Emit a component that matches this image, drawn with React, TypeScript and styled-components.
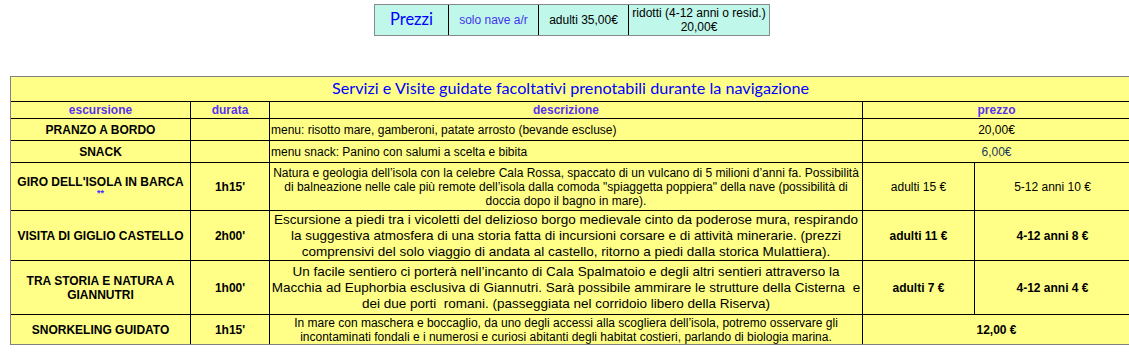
import React from 'react';
import styled, { createGlobalStyle } from 'styled-components';

const GlobalStyle = createGlobalStyle`
  html, body {
    margin: 0;
    padding: 0;
    background: #ffffff;
    overflow: hidden;
  }
  body {
    font-family: "Liberation Sans", Arial, sans-serif;
    font-size: 12px;
    color: #000;
  }
`;

const Page = styled.div`
  width: 1129px;
  padding-top: 4px;
  display: flex;
  flex-direction: column;
`;

const PriceTable = styled.table`
  margin-left: 374px;
  border-collapse: separate;
  border-spacing: 0;
  border: 1px solid #8a8a8a;
  background: #bff7ea;
  table-layout: fixed;
  width: 395px;
`;

const PriceCell = styled.td<{ $color?: string; $w: number }>`
  box-sizing: border-box;
  width: ${(p) => p.$w}px;
  height: 30px;
  padding: 0;
  text-align: center;
  vertical-align: middle;
  color: ${(p) => p.$color || '#000'};
  font-size: 12px;
  line-height: 14px;
  white-space: nowrap;
  border-left: 1px solid #000;
  &:first-child {
    border-left: none;
  }
`;

const ComicText = styled.span<{ $size: number }>`
  font-family: "Comic Sans MS", "Lato", "Noto Sans", sans-serif;
  font-size: ${(p) => p.$size}px;
  color: #0000ff;
`;

const Services = styled.table`
  margin-top: 40px;
  margin-left: 10px;
  border-collapse: separate;
  border-spacing: 0;
  border: 1px solid #808080;
  border-right: none;
  background: #ffff88;
  table-layout: fixed;
  width: 1119px;
`;

const Row = styled.tr<{ $h: number }>`
  height: ${(p) => p.$h}px;
  &:first-child td {
    border-top: none;
  }
`;

const Cell = styled.td<{
  $align?: 'left' | 'center';
  $bold?: boolean;
  $size?: number;
  $lh?: number;
  $color?: string;
}>`
  box-sizing: border-box;
  padding: 0 1px;
  border-top: 1px solid #000;
  border-left: 1px solid #000;
  vertical-align: middle;
  text-align: ${(p) => p.$align || 'center'};
  font-weight: ${(p) => (p.$bold ? 'bold' : 'normal')};
  font-size: ${(p) => p.$size || 12}px;
  line-height: ${(p) => p.$lh || 14}px;
  color: ${(p) => p.$color || '#000'};
  white-space: nowrap;
  overflow: hidden;
  &:first-child {
    border-left: none;
  }
`;

const HeadCell = styled(Cell)`
  color: #5a32f0;
  font-weight: bold;
`;

const Stars = styled.div`
  color: #3a2cff;
  font-size: 9px;
  line-height: 9px;
`;

type Excursion = {
  name: React.ReactNode;
  time: string;
  lines: string[];
  size: number;
  lh: number;
  h: number;
  adults: string;
  kids: string;
  boldPrice: boolean;
};

const excursions: Excursion[] = [
  {
    name: (
      <>
        GIRO DELL'ISOLA IN BARCA
        <Stars>**</Stars>
      </>
    ),
    time: "1h15'",
    lines: [
      'Natura e geologia dell\u2019isola con la celebre Cala Rossa, spaccato di un vulcano di 5 milioni d\u2019anni fa. Possibilità',
      'di balneazione nelle cale più remote dell\u2019isola dalla comoda "spiaggetta poppiera" della nave (possibilità di',
      'doccia dopo il bagno in mare).',
    ],
    size: 12,
    lh: 14,
    h: 48,
    adults: 'adulti 15 €',
    kids: '5-12 anni 10 €',
    boldPrice: false,
  },
  {
    name: 'VISITA DI GIGLIO CASTELLO',
    time: "2h00'",
    lines: [
      'Escursione a piedi tra i vicoletti del delizioso borgo medievale cinto da poderose mura, respirando',
      'la suggestiva atmosfera di una storia fatta di incursioni corsare e di attività minerarie. (prezzi',
      'comprensivi del solo viaggio di andata al castello, ritorno a piedi dalla storica Mulattiera).',
    ],
    size: 13.5,
    lh: 16,
    h: 50,
    adults: 'adulti 11 €',
    kids: '4-12 anni 8 €',
    boldPrice: true,
  },
  {
    name: (
      <>
        TRA STORIA E NATURA A<br />
        GIANNUTRI
      </>
    ),
    time: "1h00'",
    lines: [
      'Un facile sentiero ci porterà nell\u2019incanto di Cala Spalmatoio e degli altri sentieri attraverso la',
      'Macchia ad Euphorbia esclusiva di Giannutri. Sarà possibile ammirare le strutture della Cisterna  e',
      'dei due porti  romani. (passeggiata nel corridoio libero della Riserva)',
    ],
    size: 13.5,
    lh: 16,
    h: 54,
    adults: 'adulti 7 €',
    kids: '4-12 anni 4 €',
    boldPrice: true,
  },
];

const Lines = ({ lines }: { lines: string[] }) => (
  <>
    {lines.map((l, i) => (
      <div key={i} style={{ whiteSpace: 'pre' }}>
        {l}
      </div>
    ))}
  </>
);

const App = () => {
  return (
    <Page>
      <GlobalStyle />
      <PriceTable>
        <tbody>
          <tr>
            <PriceCell $w={73}>
              <ComicText $size={16.5}>Prezzi</ComicText>
            </PriceCell>
            <PriceCell $w={90} $color="#4433ee">
              solo nave a/r
            </PriceCell>
            <PriceCell $w={90}>adulti 35,00€</PriceCell>
            <PriceCell $w={141}>
              ridotti (4-12 anni o resid.)
              <br />
              20,00€
            </PriceCell>
          </tr>
        </tbody>
      </PriceTable>

      <Services>
        <colgroup>
          <col style={{ width: 179 }} />
          <col style={{ width: 79 }} />
          <col style={{ width: 593 }} />
          <col style={{ width: 112 }} />
          <col style={{ width: 156 }} />
        </colgroup>
        <tbody>
          <Row $h={24}>
            <Cell colSpan={5} $lh={18}>
              <ComicText $size={16.2}>
                Servizi e Visite guidate facoltativi prenotabili durante la navigazione
              </ComicText>
            </Cell>
          </Row>
          <Row $h={17}>
            <HeadCell>escursione</HeadCell>
            <HeadCell>durata</HeadCell>
            <HeadCell>descrizione</HeadCell>
            <HeadCell colSpan={2}>prezzo</HeadCell>
          </Row>
          <Row $h={22}>
            <Cell $bold>PRANZO A BORDO</Cell>
            <Cell />
            <Cell $align="left">menu: risotto mare, gamberoni, patate arrosto (bevande escluse)</Cell>
            <Cell colSpan={2}>20,00€</Cell>
          </Row>
          <Row $h={22}>
            <Cell $bold>SNACK</Cell>
            <Cell />
            <Cell $align="left">menu snack: Panino con salumi a scelta e bibita</Cell>
            <Cell colSpan={2} $color="#1c3a5a">
              6,00€
            </Cell>
          </Row>
          {excursions.map((e, i) => (
            <Row key={i} $h={e.h}>
              <Cell $bold>{e.name}</Cell>
              <Cell $bold>{e.time}</Cell>
              <Cell $size={e.size} $lh={e.lh}>
                <Lines lines={e.lines} />
              </Cell>
              <Cell $bold={e.boldPrice}>{e.adults}</Cell>
              <Cell $bold={e.boldPrice}>{e.kids}</Cell>
            </Row>
          ))}
          <Row $h={30}>
            <Cell $bold>SNORKELING GUIDATO</Cell>
            <Cell $bold>1h15'</Cell>
            <Cell>
              <Lines
                lines={[
                  'In mare con maschera e boccaglio, da uno degli accessi alla scogliera dell\u2019isola, potremo osservare gli',
                  'incontaminati fondali e i numerosi e curiosi abitanti degli habitat costieri, parlando di biologia marina.',
                ]}
              />
            </Cell>
            <Cell colSpan={2} $bold>
              12,00 €
            </Cell>
          </Row>
        </tbody>
      </Services>
    </Page>
  );
};

export default App;
